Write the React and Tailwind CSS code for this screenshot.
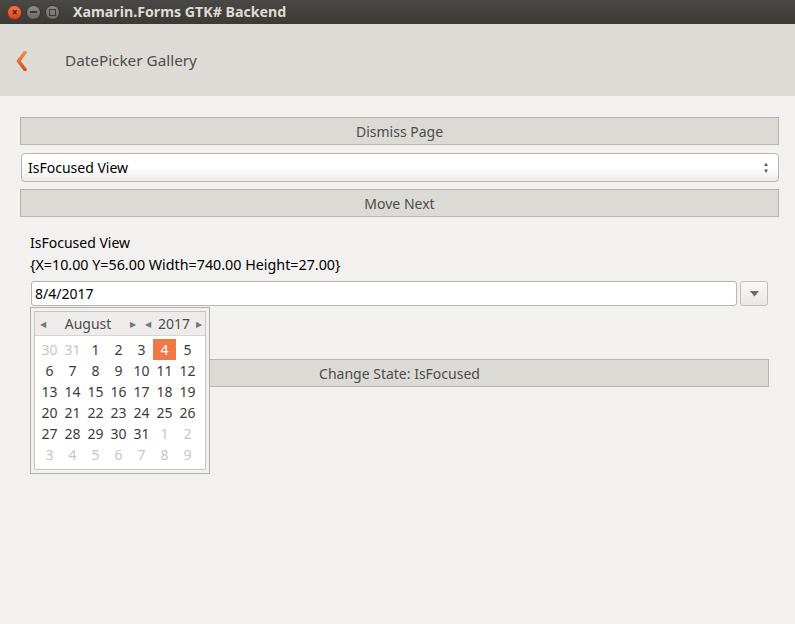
import React from "react";

const font = { fontFamily: '"Noto Sans", "Open Sans", sans-serif' };

function Calendar() {
  const rows = [
    [[30, 0], [31, 0], [1, 1], [2, 1], [3, 1], [4, 2], [5, 1]],
    [[6, 1], [7, 1], [8, 1], [9, 1], [10, 1], [11, 1], [12, 1]],
    [[13, 1], [14, 1], [15, 1], [16, 1], [17, 1], [18, 1], [19, 1]],
    [[20, 1], [21, 1], [22, 1], [23, 1], [24, 1], [25, 1], [26, 1]],
    [[27, 1], [28, 1], [29, 1], [30, 1], [31, 1], [1, 0], [2, 0]],
    [[3, 0], [4, 0], [5, 0], [6, 0], [7, 0], [8, 0], [9, 0]],
  ];
  return (
    <div className="absolute left-[30px] top-[307px] w-[180px] h-[167px] bg-[#f2f1f0] border border-[#b3b0ab] p-[3px]">
      <div className="w-full h-full border border-[#c9c6c1] bg-white flex flex-col">
        <div className="h-[24px] bg-[#edecea] border-b border-[#d8d5d0] flex items-center text-[14px] text-[#4c4c4c]">
          <span className="w-[16px] flex justify-center text-[8px] text-[#777]">◀</span>
          <span className="w-[74px] text-center">August</span>
          <span className="w-[16px] flex justify-center text-[8px] text-[#777]">▶</span>
          <span className="w-[14px] flex justify-center text-[8px] text-[#777]">◀</span>
          <span className="w-[38px] text-center">2017</span>
          <span className="w-[12px] flex justify-center text-[8px] text-[#777]">▶</span>
        </div>
        <div className="flex flex-col pt-[3px] pl-[3px]">
          {rows.map((r, i) => (
            <div key={i} className="flex h-[21px]">
              {r.map(([d, t], j) => (
                <div
                  key={j}
                  className={
                    "w-[23px] h-[21px] flex items-center justify-center text-[14px] " +
                    (t === 0
                      ? "text-[#c8c6c2]"
                      : t === 2
                      ? "bg-[#f07746] text-white"
                      : "text-[#3c3c3c]")
                  }
                >
                  {d}
                </div>
              ))}
            </div>
          ))}
        </div>
      </div>
    </div>
  );
}

function GtkButton({ label, className = "" }) {
  return (
    <div
      className={
        "h-[28px] bg-[#dcdad5] border border-[#b8b5b0] flex items-center justify-center text-[14px] text-[#4c4c4c] " +
        className
      }
    >
      {label}
    </div>
  );
}

export default function App() {
  return (
    <div className="relative w-[795px] h-[624px] bg-[#f2f1f0] overflow-hidden" style={font}>
      {/* title bar */}
      <div className="h-[24px] bg-gradient-to-b from-[#4a4945] to-[#3b3a36] flex items-center pl-[7px]">
        <div className="w-[15px] h-[15px] rounded-full bg-gradient-to-b from-[#f2744a] to-[#d8451c] border border-[#8f2d10] flex items-center justify-center text-[10px] leading-none text-[#3a1206] font-bold">
          ×
        </div>
        <div className="ml-[4px] w-[15px] h-[15px] rounded-full bg-gradient-to-b from-[#8e8d88] to-[#6b6a66] border border-[#353430] flex items-center justify-center">
          <div className="w-[7px] h-[2px] bg-[#3b3a36]" />
        </div>
        <div className="ml-[4px] w-[15px] h-[15px] rounded-full bg-gradient-to-b from-[#8e8d88] to-[#6b6a66] border border-[#353430] flex items-center justify-center">
          <div className="w-[7px] h-[7px] border border-[#3b3a36]" />
        </div>
        <div className="ml-[13px] text-[14.2px] font-bold text-[#dfdbd2]">Xamarin.Forms GTK# Backend</div>
      </div>

      {/* header */}
      <div className="h-[72px] bg-[#dcdbd6] flex items-center">
        <svg width="14" height="20" viewBox="0 0 14 20" className="ml-[15px] mt-[1px]">
          <defs>
            <linearGradient id="cg" x1="0" y1="0" x2="0" y2="1">
              <stop offset="0" stopColor="#f28a45" />
              <stop offset="1" stopColor="#d9531e" />
            </linearGradient>
          </defs>
          <path d="M10 1.5 L3.5 10 L10 18.5" fill="none" stroke="url(#cg)" strokeWidth="3.6" strokeLinecap="round" strokeLinejoin="round" />
        </svg>
        <div className="ml-[36px] mt-[1px] text-[15.3px] text-[#4c4c4c]">DatePicker Gallery</div>
      </div>

      {/* content */}
      <div className="pl-[20px] pr-[16px] pt-[21px] flex flex-col">
        <GtkButton label="Dismiss Page" />
        <div className="mt-[8px] ml-[1px] h-[29px] rounded-[4px] border border-[#b8b5b0] bg-gradient-to-b from-white via-white to-[#ecebe9] flex items-center pl-[6px] pr-[9px] text-[14px] text-black">
          <span className="flex-1">IsFocused View</span>
          <span className="flex flex-col items-center text-[6px] leading-[7px] text-[#555]">
            <span>▲</span>
            <span>▼</span>
          </span>
        </div>
        <GtkButton label="Move Next" className="mt-[7px]" />

        <div className="pl-[10px] pr-[10px] flex flex-col">
          <div className="mt-[14px] h-[22px] flex items-center text-[14px] text-black">IsFocused View</div>
          <div className="mt-[1px] h-[22px] flex items-center text-[14.3px] text-black">
            {"{X=10.00 Y=56.00 Width=740.00 Height=27.00}"}
          </div>
          <div className="mt-[5px] flex items-center h-[25px]">
            <div className="flex-1 ml-[1px] h-[25px] rounded-[3px] border border-[#b8b5b0] bg-white flex items-center pl-[3px] text-[14px] text-black">
              8/4/2017
            </div>
            <div className="ml-[3px] mr-[1px] w-[28px] h-[25px] rounded-[3px] border border-[#c1beb9] bg-gradient-to-b from-[#f9f9f8] to-[#e8e7e5] flex items-center justify-center">
              <svg width="9" height="6" viewBox="0 0 9 6">
                <path d="M0 0 H9 L4.5 5.5 Z" fill="#6a6a6a" />
              </svg>
            </div>
          </div>
          <GtkButton label="Change State: IsFocused" className="mt-[53px]" />
        </div>
      </div>

      <Calendar />
    </div>
  );
}
